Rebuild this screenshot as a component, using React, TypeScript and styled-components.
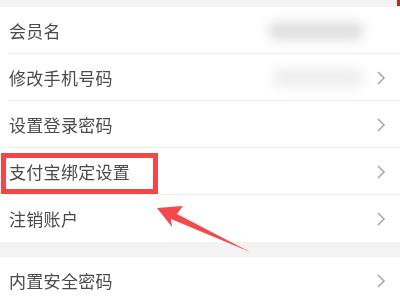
import React from 'react';
import styled, { createGlobalStyle } from 'styled-components';

const GlobalStyle = createGlobalStyle`
  html, body {
    margin: 0;
    padding: 0;
    background: #ffffff;
  }
  body {
    font-family: "Noto Sans CJK SC", "Noto Sans", sans-serif;
  }
`;

const Page = styled.div`
  position: relative;
  width: 400px;
  height: 300px;
  overflow: hidden;
  background: #f3f3f3;
  display: flex;
  flex-direction: column;
`;

const TopBand = styled.div`
  height: 7px;
  background: #f2f2f2;
  flex-shrink: 0;
`;

const Group = styled.div`
  background: #ffffff;
  display: flex;
  flex-direction: column;
`;

const GapBand = styled.div`
  height: 15px;
  background: #f3f3f3;
  flex-shrink: 0;
`;

const Row = styled.div<{ $last?: boolean }>`
  position: relative;
  height: 47px;
  display: flex;
  align-items: center;
  justify-content: space-between;
  padding: 0 14px 0 9px;
  box-sizing: border-box;

  &::after {
    content: '';
    display: ${(p) => (p.$last ? 'none' : 'block')};
    position: absolute;
    left: 8px;
    right: 0;
    bottom: 0;
    height: 1px;
    background: #efefef;
  }
`;

const Label = styled.span`
  font-size: 17px;
  color: #4a4a4a;
  letter-spacing: 0.3px;
  filter: blur(0.3px);
`;

const Blurred = styled.div<{ $shade: string; $w: number }>`
  width: ${(p) => p.$w}px;
  height: 18px;
  background: ${(p) => p.$shade};
  border-radius: 9px;
  filter: blur(6px);
`;

const Right = styled.div`
  display: flex;
  align-items: center;
  gap: 12px;
`;

const Chevron = styled.svg`
  width: 10px;
  height: 16px;
  flex-shrink: 0;
`;

const HighlightBox = styled.div`
  position: absolute;
  left: 1px;
  top: 153px;
  width: 147px;
  height: 31px;
  border: 5px solid #f2464a;
`;

const ArrowSvg = styled.svg`
  position: absolute;
  left: 0;
  top: 0;
  pointer-events: none;
`;

const CornerMark = styled.div`
  position: absolute;
  right: 0;
  top: 0;
  width: 3px;
  height: 6px;
  background: #b02b2b;
`;

function Arrow() {
  return (
    <Chevron viewBox="0 0 10 16">
      <path d="M2 2 L8 8 L2 14" fill="none" stroke="#a9a9a9" strokeWidth="1.6" />
    </Chevron>
  );
}

const rows = [
  { label: '会员名', blur: { shade: '#dedede', w: 96 }, chevron: false },
  { label: '修改手机号码', blur: { shade: '#ededed', w: 92 }, chevron: true },
  { label: '设置登录密码', chevron: true },
  { label: '支付宝绑定设置', chevron: true },
  { label: '注销账户', chevron: true },
];

export default function App() {
  return (
    <>
      <GlobalStyle />
      <Page>
        <TopBand />
        <Group>
          {rows.map((r, i) => (
            <Row key={r.label} $last={i === rows.length - 1}>
              <Label>{r.label}</Label>
              <Right>
                {r.blur && <Blurred $shade={r.blur.shade} $w={r.blur.w} />}
                {r.chevron ? <Arrow /> : <Chevron viewBox="0 0 10 16" />}
              </Right>
            </Row>
          ))}
        </Group>
        <GapBand />
        <Group>
          <Row $last>
            <Label>内置安全密码</Label>
            <Right>
              <Arrow />
            </Right>
          </Row>
        </Group>
        <HighlightBox />
        <ArrowSvg width="400" height="300" viewBox="0 0 400 300">
          <polygon points="157,208 183,206 177,214 250,252 171,219 172,227" fill="#f5484b" />
        </ArrowSvg>
        <CornerMark />
      </Page>
    </>
  );
}
